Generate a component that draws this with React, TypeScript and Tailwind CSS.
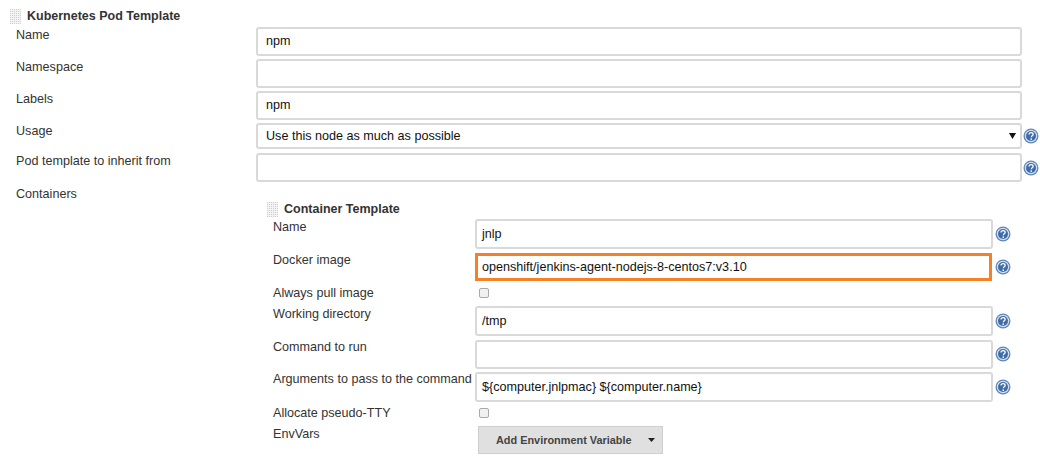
import type { ReactNode } from "react";

function HelpIcon() {
  return (
    <svg width="16" height="16" viewBox="0 0 16 16" className="shrink-0">
      <circle cx="8" cy="8" r="7.5" fill="#5f86ba" />
      <circle cx="8" cy="8" r="6.2" fill="#d5e0ee" />
      <circle cx="8" cy="8" r="5" fill="#3f6ba6" />
      <path d="M6 6.6c0-1.2.9-1.9 2.1-1.9s2 .7 2 1.7c0 1.4-1.8 1.4-1.8 2.8" fill="none" stroke="#fff" strokeWidth="1.3" />
      <rect x="7.5" y="10.4" width="1.5" height="1.5" fill="#fff" />
    </svg>
  );
}

function Grip() {
  const dots = [];
  for (let y = 0; y < 8; y++) {
    for (let x = 0; x < 6; x++) {
      dots.push(<rect key={`${x}-${y}`} x={x * 2} y={y * 2} width="1" height="1" fill="#cfcfcf" />);
    }
  }
  return (
    <svg width="11" height="15" viewBox="0 0 11 15" className="shrink-0 bg-[#f3f3f3]">
      {dots}
    </svg>
  );
}

function Field({ value = "", box = "h-[29px] w-[766px] pl-[8px]" }: { value?: string; box?: string }) {
  return (
    <div className={`flex shrink-0 items-center rounded-[3px] border-2 border-[#d9d9d9] text-[12.6px] text-[#111] ${box}`}>
      {value}
    </div>
  );
}

function Row({ label, width, height, tight, children }: { label: string; width: string; height: string; tight?: boolean; children?: ReactNode }) {
  return (
    <div className={`flex items-start ${height}`}>
      <div className={`${width} shrink-0 ${tight ? "" : "pt-[1px]"} text-[12.6px] leading-[14px] text-[#333]`}>{label}</div>
      {children}
    </div>
  );
}

function Checkbox() {
  return <div className="ml-[4px] mt-[3px] h-[10px] w-[10px] rounded-[2px] border border-[#a9a9a9] bg-[#f1f1f1]" />;
}

function Heading({ children }: { children: ReactNode }) {
  return (
    <div className="flex items-center gap-[6px] text-[12.5px] font-bold text-[#333]">
      <Grip />
      {children}
    </div>
  );
}

export default function App() {
  const outer = "w-[240px]";
  const inner = "w-[202px]";
  const innerBox = "h-[30px] w-[518px] pl-[5px]";
  return (
    <div className="h-[461px] w-[1040px] overflow-hidden bg-white pl-[16px] font-['Liberation_Sans',Arial,sans-serif]">
      <div className="-ml-[6px] flex h-[27px] items-end pb-[1px]">
        <Heading>Kubernetes Pod Template</Heading>
      </div>

      <Row label="Name" width={outer} height="h-[32px]">
        <Field value="npm" />
      </Row>
      <Row label="Namespace" width={outer} height="h-[32px]">
        <Field />
      </Row>
      <Row label="Labels" width={outer} height="h-[32px]">
        <Field value="npm" />
      </Row>
      <Row label="Usage" width={outer} height="h-[30px]">
        <div className="relative">
          <Field value="Use this node as much as possible" box="h-[26px] w-[766px] pl-[8px]" />
          <svg width="7" height="6" viewBox="0 0 7 6" className="absolute right-[6px] top-[10px]">
            <polygon points="0,0 7,0 3.5,6" fill="#111" />
          </svg>
        </div>
        <div className="ml-[1px] mt-[5px]">
          <HelpIcon />
        </div>
      </Row>
      <Row label="Pod template to inherit from" width={outer} height="h-[33px]">
        <Field />
        <div className="ml-[1px] mt-[7px]">
          <HelpIcon />
        </div>
      </Row>

      <div className="flex">
        <div className="w-[251px] shrink-0 pt-[1px] text-[12.6px] leading-[14px] text-[#333]">Containers</div>
        <div className="pt-[15px]">
          <div className="mb-[2px] flex h-[16px] items-center">
            <Heading>Container Template</Heading>
          </div>
          <div className="pl-[6px]">
            <Row label="Name" width={inner} height="h-[34px]">
              <Field value="jnlp" box={innerBox} />
              <div className="ml-[2px] mt-[7px]">
                <HelpIcon />
              </div>
            </Row>
            <Row label="Docker image" width={inner} height="h-[32px]" tight>
              <div className="flex h-[28px] w-[517px] shrink-0 items-center border-[3px] border-[#f58025] pl-[4px] text-[12.6px] text-[#111]">
                openshift/jenkins-agent-nodejs-8-centos7:v3.10
              </div>
              <div className="ml-[3px] mt-[6px]">
                <HelpIcon />
              </div>
            </Row>
            <Row label="Always pull image" width={inner} height="h-[21px]">
              <Checkbox />
            </Row>
            <Row label="Working directory" width={inner} height="h-[34px]">
              <Field value="/tmp" box={innerBox} />
              <div className="ml-[2px] mt-[7px]">
                <HelpIcon />
              </div>
            </Row>
            <Row label="Command to run" width={inner} height="h-[32px]" tight>
              <Field box="h-[29px] w-[518px] pl-[5px]" />
              <div className="ml-[2px] mt-[6px]">
                <HelpIcon />
              </div>
            </Row>
            <Row label="Arguments to pass to the command" width={inner} height="h-[33px]" tight>
              <Field value="${computer.jnlpmac} ${computer.name}" box={innerBox} />
              <div className="ml-[2px] mt-[7px]">
                <HelpIcon />
              </div>
            </Row>
            <Row label="Allocate pseudo-TTY" width={inner} height="h-[21px]">
              <Checkbox />
            </Row>
            <Row label="EnvVars" width={inner} height="h-[28px]">
              <div className="ml-[3px] flex h-[28px] w-[185px] shrink-0 items-center whitespace-nowrap border border-[#cfcfcf] bg-[#e0e0e0] pl-[17px] text-[10.9px] font-bold text-[#444]">
                Add Environment Variable
                <svg width="7" height="4" viewBox="0 0 7 4" className="ml-[16px] shrink-0">
                  <polygon points="0,0 7,0 3.5,4" fill="#222" />
                </svg>
              </div>
            </Row>
          </div>
        </div>
      </div>
    </div>
  );
}
